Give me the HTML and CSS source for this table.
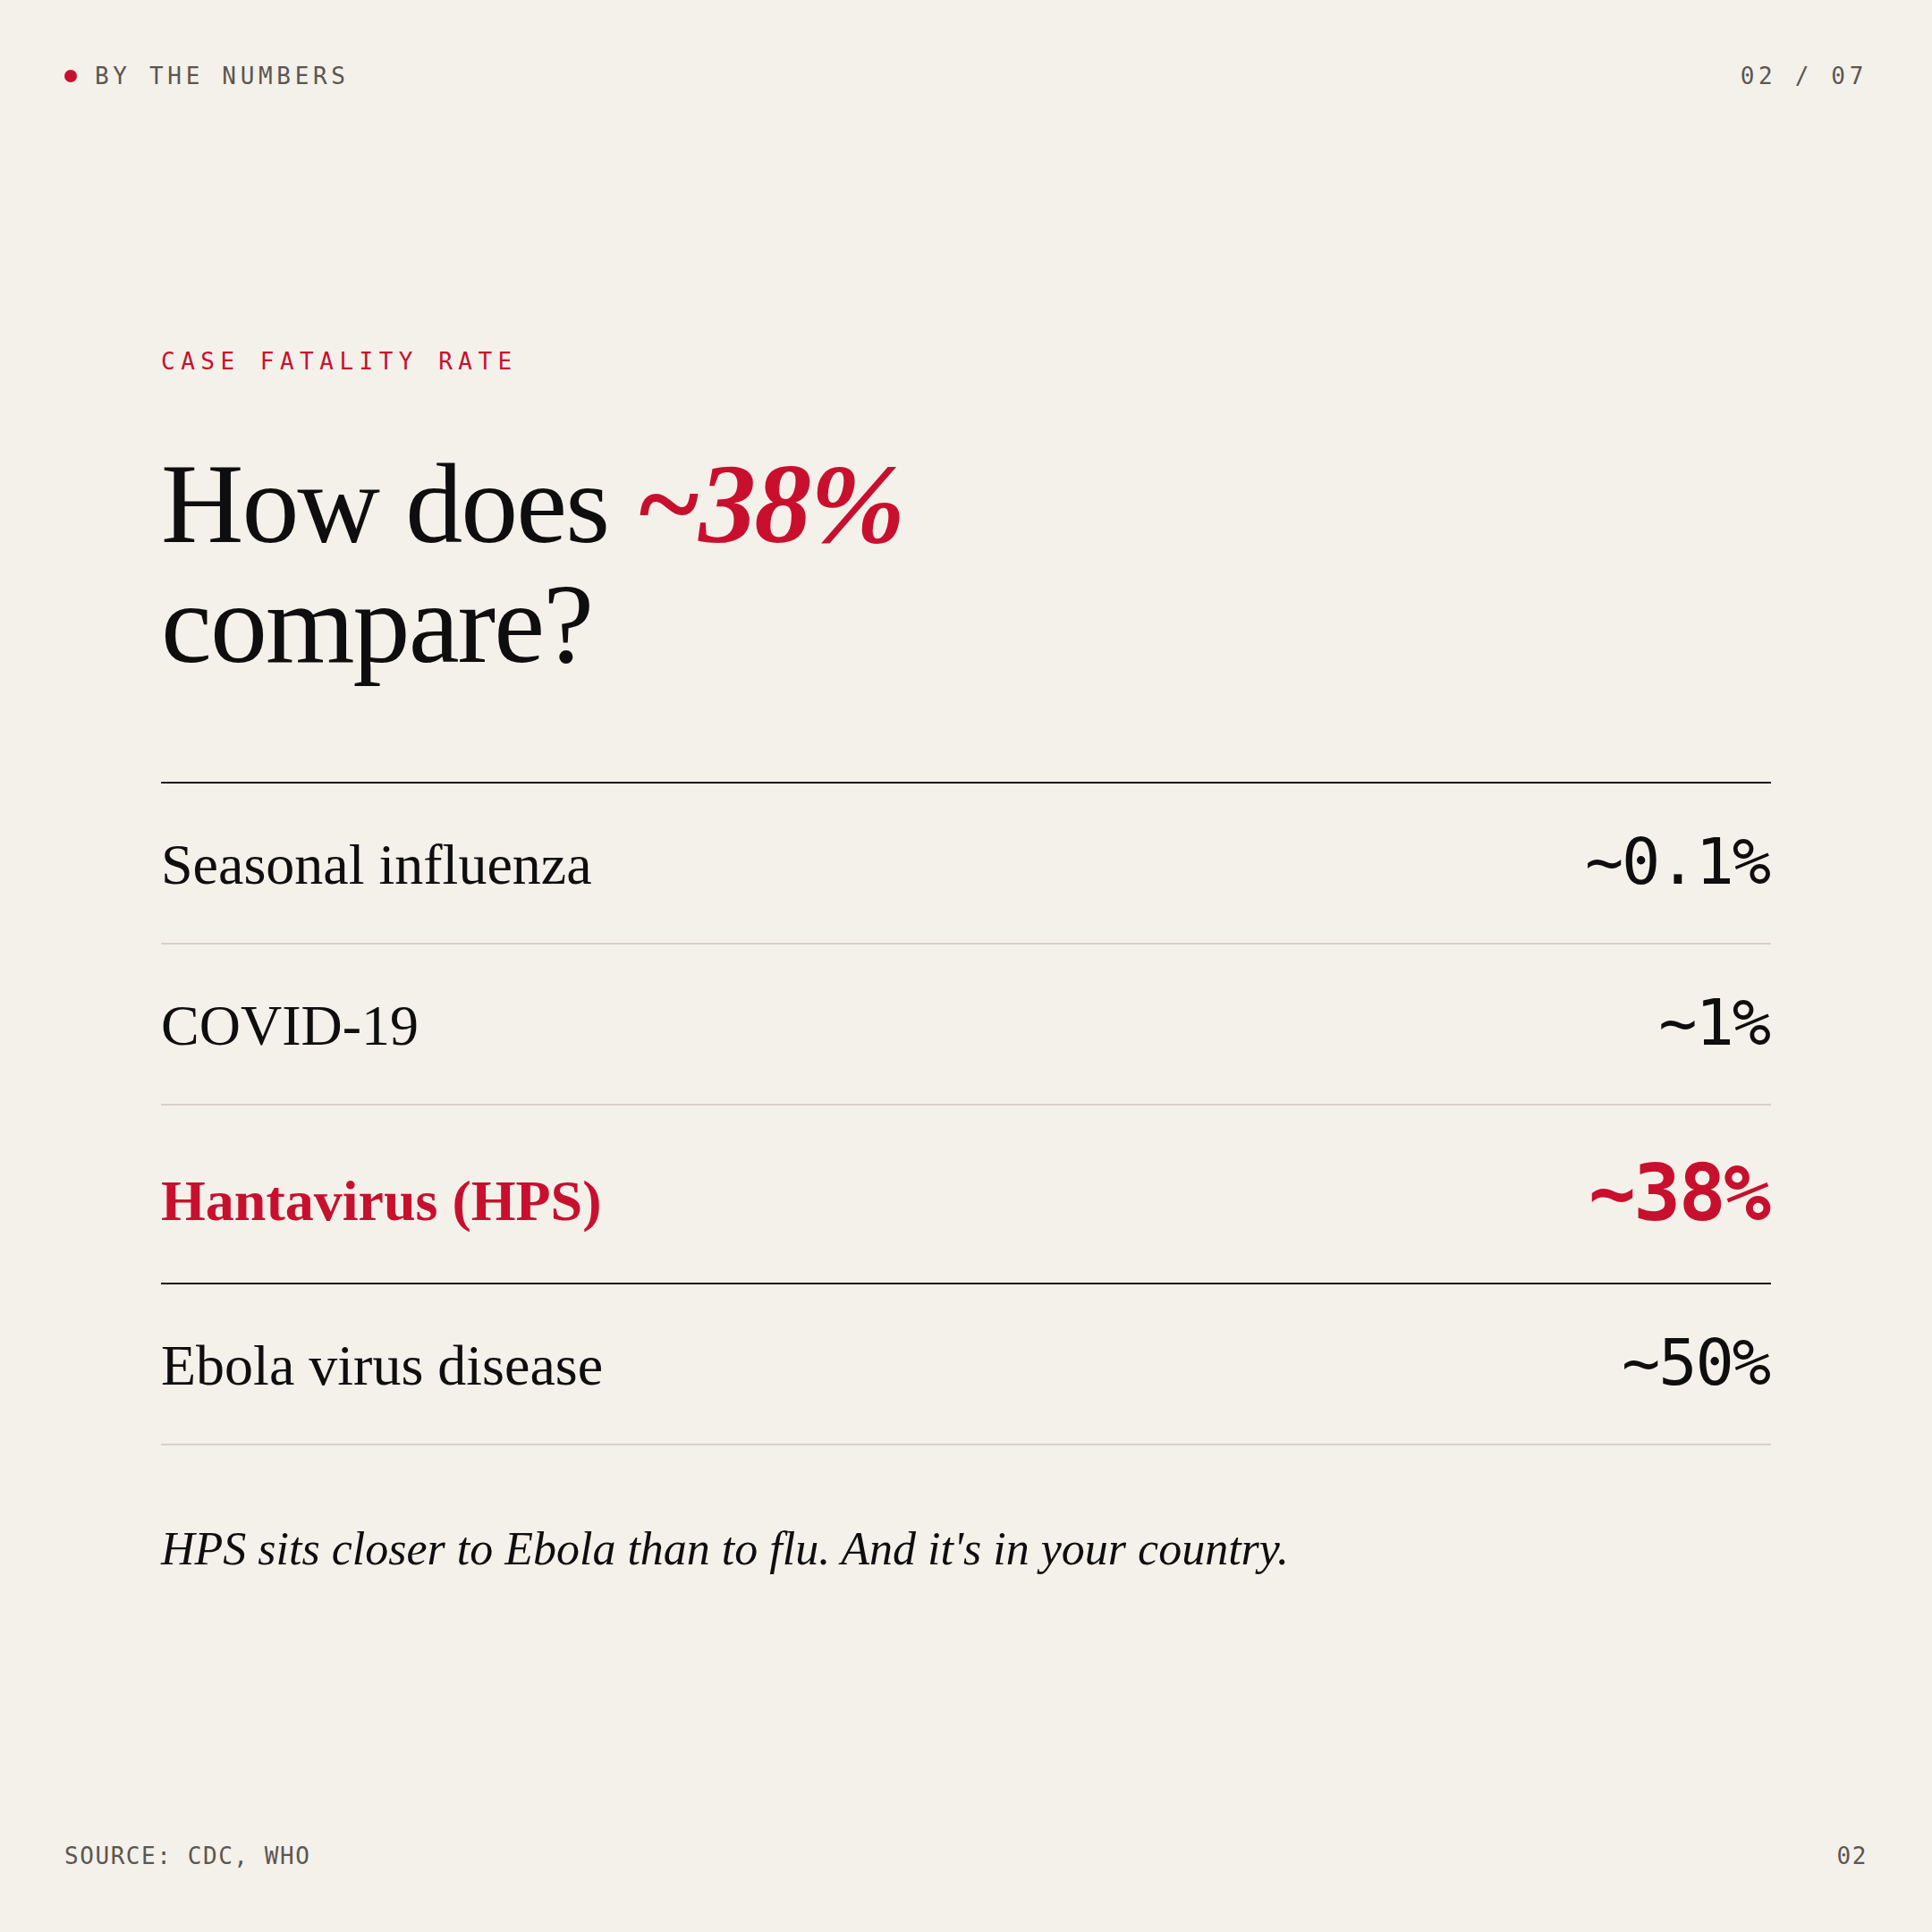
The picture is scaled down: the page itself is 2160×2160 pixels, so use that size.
FILE: index.html
```html
<!DOCTYPE html>
<html lang="en">
  <head>
    <meta charset="UTF-8" />
    <meta name="viewport" content="width=device-width, initial-scale=1.0" />
    <title>By the Numbers - Case Fatality Rate</title>
    <link rel="stylesheet" href="styles.css">
  </head>
  <body>
    <div class="slide">
      <header class="topbar">
        <div class="kicker"><span class="dot"></span>BY THE NUMBERS</div>
        <div class="counter">02 / 07</div>
      </header>

      <main class="content">
        <p class="eyebrow">CASE FATALITY RATE</p>
        <h1 class="headline">How does <em>~38%</em><br>compare?</h1>

        <div class="compare-table">
          <div class="row">
            <span class="label">Seasonal influenza</span>
            <span class="value">~0.1%</span>
          </div>
          <div class="row">
            <span class="label">COVID-19</span>
            <span class="value">~1%</span>
          </div>
          <div class="row row-highlight">
            <span class="label">Hantavirus (HPS)</span>
            <span class="value">~38%</span>
          </div>
          <div class="row">
            <span class="label">Ebola virus disease</span>
            <span class="value">~50%</span>
          </div>
        </div>

        <p class="note">HPS sits closer to Ebola than to flu. And it's in your country.</p>
      </main>

      <footer class="bottombar">
        <div class="source">SOURCE: CDC, WHO</div>
        <div class="page-num">02</div>
      </footer>
    </div>
  </body>
</html>
```

FILE: styles.css
```css
body {
  margin: 0;
  background-color: #f4f0ea;
  color: #0e0e0e;
  font-family: "Liberation Serif", "Times New Roman", serif;
}

.slide {
  width: 2160px;
  height: 2160px;
  box-sizing: border-box;
  padding: 72px;
  display: flex;
  flex-direction: column;
}

.topbar,
.bottombar {
  display: flex;
  justify-content: space-between;
  align-items: center;
  font-family: "DejaVu Sans Mono", monospace;
  font-size: 26px;
  line-height: 1;
  color: #5b5651;
}

.kicker,
.counter {
  letter-spacing: 0.18em;
}

.kicker {
  display: flex;
  align-items: center;
  gap: 20px;
}

.dot {
  width: 14px;
  height: 14px;
  border-radius: 50%;
  background: #c8102e;
}

.source,
.page-num {
  letter-spacing: 0.06em;
}

.content {
  flex: 1;
  display: flex;
  flex-direction: column;
  justify-content: center;
  padding: 0 108px;
}

.eyebrow {
  margin: 0;
  font-family: "DejaVu Sans Mono", monospace;
  font-size: 26px;
  line-height: 1;
  letter-spacing: 0.25em;
  color: #c8102e;
}

.headline {
  margin: 79px 0 0;
  font-size: 128px;
  font-weight: normal;
  line-height: 1.05;
  letter-spacing: -0.015em;
}

.headline em {
  font-weight: bold;
  color: #c8102e;
}

.compare-table {
  margin-top: 110px;
  border-top: 2px solid #1a1a1a;
}

.row {
  display: flex;
  justify-content: space-between;
  align-items: baseline;
  padding: 51px 0 55px;
  border-bottom: 2px solid #d6d1c9;
}

.label {
  font-size: 64px;
  line-height: 1;
}

.value {
  margin-right: 0.03em;
  font-family: "DejaVu Sans Mono", monospace;
  font-size: 72px;
  line-height: 1;
  letter-spacing: -0.03em;
}

.row-highlight {
  padding: 54px 0 56px;
  border-bottom-color: #1a1a1a;
  color: #c8102e;
}

.row-highlight .label {
  font-weight: bold;
}

.row-highlight .value {
  font-size: 88px;
  font-weight: bold;
}

.note {
  margin: 80px 0 0;
  font-size: 52px;
  font-style: italic;
  line-height: 1.4;
}
```
